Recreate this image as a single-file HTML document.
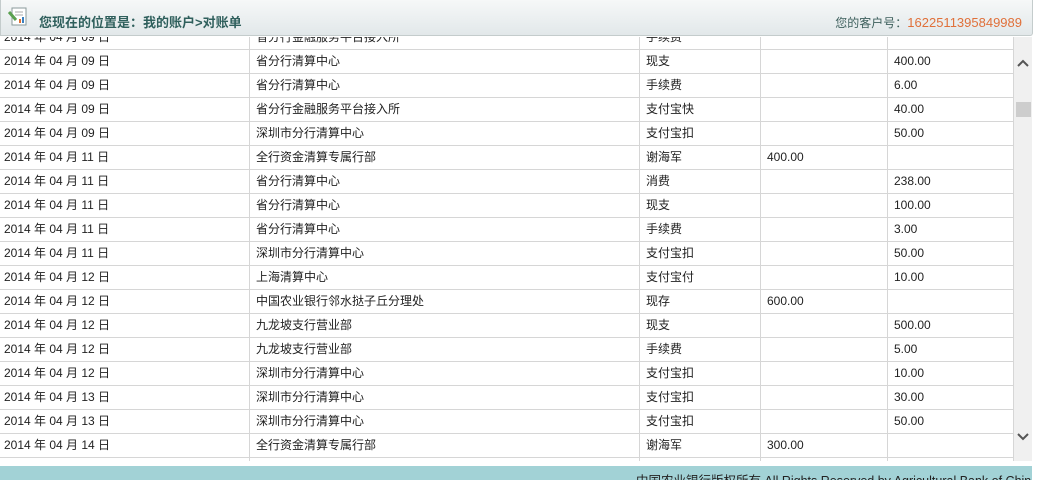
<!DOCTYPE html>
<html><head><meta charset="utf-8"><style>
html,body{margin:0;width:1042px;height:480px;overflow:hidden}
body{background:#fff;font-family:"Liberation Sans","Noto Sans CJK SC",sans-serif;font-size:12px;color:#222;position:relative}
#hd{position:absolute;left:0;top:0;width:1031px;height:35px;background:linear-gradient(#f6f8f8,#e2e8ea);border:1px solid #c4cccc;border-top:none;border-radius:0 0 3px 0}
#hd .t{position:absolute;left:38px;top:12px;font-weight:bold;font-size:13px;color:#2f5f5c}
#hd .r{position:absolute;right:10px;top:14px;font-size:12px;color:#3d5f5c}
#hd .r span{color:#e0703a;font-size:13px}
#tb{position:absolute;left:0;top:37px;width:1014px;height:424px;overflow:hidden}
#in{position:absolute;left:0;top:2px;width:1014px;height:450px}
.row{position:absolute;left:0;width:1014px;height:24px;border-bottom:1px solid #d6d6d6;box-sizing:border-box}
.row div{position:absolute;top:0;height:23px;line-height:23px;border-right:1px solid #d6d6d6;box-sizing:border-box;white-space:nowrap}
.c1{left:0;width:250px;padding-left:4px}.c2{left:250px;width:390px;padding-left:6px}.c3{left:640px;width:121px;padding-left:6px}.c4{left:761px;width:127px;padding-left:6px}.c5{left:888px;width:126px;padding-left:6px}
#sb{position:absolute;left:1014px;top:37px;width:18px;height:424px;background:#f0f0f0}
#th{position:absolute;left:1016px;top:102px;width:15px;height:15px;background:#cdcdcd}
#ft{position:absolute;left:0;top:466px;width:1032px;height:14px;background:#a2d2d6;font-size:12.5px;color:#222;overflow:hidden}
#ft span{position:absolute;left:636px;top:4px;white-space:nowrap}
</style></head><body>
<div id="hd">
<svg style="position:absolute;left:6px;top:6px" width="22" height="22" viewBox="0 0 22 22"><rect x="5" y="2" width="14" height="17" fill="#fff" stroke="#8a9a9a"/><line x1="8" y1="6" x2="16" y2="6" stroke="#aaa"/><line x1="8" y1="9" x2="16" y2="9" stroke="#aaa"/><rect x="12" y="13" width="2" height="4" fill="#e07030"/><rect x="15" y="11" width="2" height="6" fill="#3a80c0"/><path d="M2 6 L9 14" stroke="#5aa050" stroke-width="3"/></svg>
<div class="t">您现在的位置是：我的账户&gt;对账单</div>
<div class="r">您的客户号：<span>1622511395849989</span></div>
</div>
<div id="tb"><div id="in">
<div class="row" style="top:-13px"><div class="c1">2014 年 04 月 09 日</div><div class="c2">省分行金融服务平台接入所</div><div class="c3">手续费</div><div class="c4"></div><div class="c5"></div></div>
<div class="row" style="top:11px"><div class="c1">2014 年 04 月 09 日</div><div class="c2">省分行清算中心</div><div class="c3">现支</div><div class="c4"></div><div class="c5">400.00</div></div>
<div class="row" style="top:35px"><div class="c1">2014 年 04 月 09 日</div><div class="c2">省分行清算中心</div><div class="c3">手续费</div><div class="c4"></div><div class="c5">6.00</div></div>
<div class="row" style="top:59px"><div class="c1">2014 年 04 月 09 日</div><div class="c2">省分行金融服务平台接入所</div><div class="c3">支付宝快</div><div class="c4"></div><div class="c5">40.00</div></div>
<div class="row" style="top:83px"><div class="c1">2014 年 04 月 09 日</div><div class="c2">深圳市分行清算中心</div><div class="c3">支付宝扣</div><div class="c4"></div><div class="c5">50.00</div></div>
<div class="row" style="top:107px"><div class="c1">2014 年 04 月 11 日</div><div class="c2">全行资金清算专属行部</div><div class="c3">谢海军</div><div class="c4">400.00</div><div class="c5"></div></div>
<div class="row" style="top:131px"><div class="c1">2014 年 04 月 11 日</div><div class="c2">省分行清算中心</div><div class="c3">消费</div><div class="c4"></div><div class="c5">238.00</div></div>
<div class="row" style="top:155px"><div class="c1">2014 年 04 月 11 日</div><div class="c2">省分行清算中心</div><div class="c3">现支</div><div class="c4"></div><div class="c5">100.00</div></div>
<div class="row" style="top:179px"><div class="c1">2014 年 04 月 11 日</div><div class="c2">省分行清算中心</div><div class="c3">手续费</div><div class="c4"></div><div class="c5">3.00</div></div>
<div class="row" style="top:203px"><div class="c1">2014 年 04 月 11 日</div><div class="c2">深圳市分行清算中心</div><div class="c3">支付宝扣</div><div class="c4"></div><div class="c5">50.00</div></div>
<div class="row" style="top:227px"><div class="c1">2014 年 04 月 12 日</div><div class="c2">上海清算中心</div><div class="c3">支付宝付</div><div class="c4"></div><div class="c5">10.00</div></div>
<div class="row" style="top:251px"><div class="c1">2014 年 04 月 12 日</div><div class="c2">中国农业银行邻水挞子丘分理处</div><div class="c3">现存</div><div class="c4">600.00</div><div class="c5"></div></div>
<div class="row" style="top:275px"><div class="c1">2014 年 04 月 12 日</div><div class="c2">九龙坡支行营业部</div><div class="c3">现支</div><div class="c4"></div><div class="c5">500.00</div></div>
<div class="row" style="top:299px"><div class="c1">2014 年 04 月 12 日</div><div class="c2">九龙坡支行营业部</div><div class="c3">手续费</div><div class="c4"></div><div class="c5">5.00</div></div>
<div class="row" style="top:323px"><div class="c1">2014 年 04 月 12 日</div><div class="c2">深圳市分行清算中心</div><div class="c3">支付宝扣</div><div class="c4"></div><div class="c5">10.00</div></div>
<div class="row" style="top:347px"><div class="c1">2014 年 04 月 13 日</div><div class="c2">深圳市分行清算中心</div><div class="c3">支付宝扣</div><div class="c4"></div><div class="c5">30.00</div></div>
<div class="row" style="top:371px"><div class="c1">2014 年 04 月 13 日</div><div class="c2">深圳市分行清算中心</div><div class="c3">支付宝扣</div><div class="c4"></div><div class="c5">50.00</div></div>
<div class="row" style="top:395px"><div class="c1">2014 年 04 月 14 日</div><div class="c2">全行资金清算专属行部</div><div class="c3">谢海军</div><div class="c4">300.00</div><div class="c5"></div></div>
<div class="row" style="top:419px"><div class="c1"></div><div class="c2"></div><div class="c3"></div><div class="c4"></div><div class="c5"></div></div>
</div></div>
<div id="sb"><svg style="position:absolute;left:3px;top:22px" width="12" height="8"><path d="M1 7 L6 2 L11 7" stroke="#555" stroke-width="2" fill="none"/></svg>
<svg style="position:absolute;left:3px;top:396px" width="12" height="8"><path d="M1 1 L6 6 L11 1" stroke="#555" stroke-width="2" fill="none"/></svg></div>
<div id="th"></div>
<div id="ft"><span>中国农业银行版权所有 All Rights Reserved by Agricultural Bank of China</span></div>
</body></html>
